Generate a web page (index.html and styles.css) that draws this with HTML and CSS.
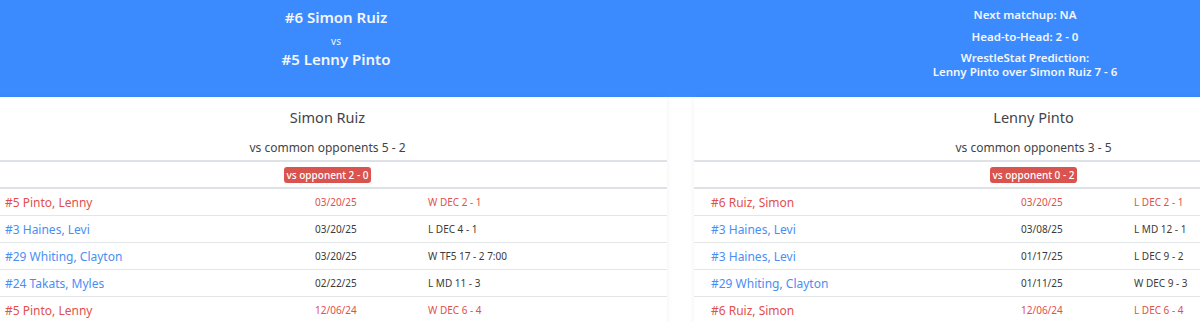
FILE: index.html
```html
<!DOCTYPE html>
<html>
<head>
<meta charset="utf-8">
<link rel="stylesheet" href="styles.css">
</head>
<body>
<div class="page">
  <header class="hero">
    <div class="hero-col hero-left">
      <div class="hero-name">#6 Simon Ruiz</div>
      <div class="hero-vs">vs</div>
      <div class="hero-name">#5 Lenny Pinto</div>
    </div>
    <div class="hero-col hero-right">
      <p class="hero-line">Next matchup: NA</p>
      <p class="hero-line">Head-to-Head: 2 - 0</p>
      <p class="hero-line">WrestleStat Prediction:<br>Lenny Pinto over Simon Ruiz 7 - 6</p>
    </div>
  </header>
  <main class="cards">
    <section class="card">
      <h2 class="card-title">Simon Ruiz</h2>
      <div class="card-sub">vs common opponents 5 - 2</div>
      <div class="badge-row"><span class="badge">vs opponent 2 - 0</span></div>
      <div class="row opp"><span class="c-name">#5 Pinto, Lenny</span><span class="c-date">03/20/25</span><span class="c-res">W DEC 2 - 1</span></div>
      <div class="row"><span class="c-name">#3 Haines, Levi</span><span class="c-date">03/20/25</span><span class="c-res">L DEC 4 - 1</span></div>
      <div class="row"><span class="c-name">#29 Whiting, Clayton</span><span class="c-date">03/20/25</span><span class="c-res">W TF5 17 - 2 7:00</span></div>
      <div class="row"><span class="c-name">#24 Takats, Myles</span><span class="c-date">02/22/25</span><span class="c-res">L MD 11 - 3</span></div>
      <div class="row opp"><span class="c-name">#5 Pinto, Lenny</span><span class="c-date">12/06/24</span><span class="c-res">W DEC 6 - 4</span></div>
    </section>
    <section class="card">
      <h2 class="card-title">Lenny Pinto</h2>
      <div class="card-sub">vs common opponents 3 - 5</div>
      <div class="badge-row"><span class="badge">vs opponent 0 - 2</span></div>
      <div class="row opp"><span class="c-name">#6 Ruiz, Simon</span><span class="c-date">03/20/25</span><span class="c-res">L DEC 2 - 1</span></div>
      <div class="row"><span class="c-name">#3 Haines, Levi</span><span class="c-date">03/08/25</span><span class="c-res">L MD 12 - 1</span></div>
      <div class="row"><span class="c-name">#3 Haines, Levi</span><span class="c-date">01/17/25</span><span class="c-res">L DEC 9 - 2</span></div>
      <div class="row"><span class="c-name">#29 Whiting, Clayton</span><span class="c-date">01/11/25</span><span class="c-res">W DEC 9 - 3</span></div>
      <div class="row opp"><span class="c-name">#6 Ruiz, Simon</span><span class="c-date">12/06/24</span><span class="c-res">L DEC 6 - 4</span></div>
    </section>
  </main>
</div>
</body>
</html>
```
FILE: styles.css
```css
html, body {
  margin: 0;
  padding: 0;
  background: #ffffff;
  overflow: hidden;
}
body {
  font-family: "Noto Sans", "Liberation Sans", sans-serif;
  color: #333;
}
.page {
  width: 1200px;
  overflow: hidden;
}
.hero {
  background: #3b8bff;
  color: #f4f6fb;
  height: 97px;
  display: grid;
  grid-template-columns: 672px 706px;
  overflow: hidden;
}
.hero-col {
  text-align: center;
}
.hero-left {
  padding-top: 6px;
}
.hero-name {
  font-size: 15px;
  font-weight: 600;
  line-height: 22px;
}
.hero-vs {
  font-size: 10px;
  line-height: 16px;
  margin: 5px 0 -1px;
}
.hero-right {
  padding-top: 8px;
}
.hero-line {
  margin: 0 0 7.5px;
  font-size: 11.5px;
  font-weight: 600;
  line-height: 14px;
}
.cards {
  display: flex;
  gap: 27px;
  margin-left: -12px;
  width: 1400px;
}
.card {
  width: 679px;
  flex: none;
  background: #fff;
  box-shadow: 0 0 6px rgba(0, 0, 0, 0.06);
  padding-bottom: 10px;
}
.card-title {
  margin: 0;
  padding-top: 9px;
  font-size: 14.5px;
  font-weight: 400;
  line-height: 22px;
  color: #3f4448;
  text-align: center;
}
.card-sub {
  font-size: 12px;
  line-height: 18px;
  padding: 11px 0 3px;
  text-align: center;
  color: #3f4448;
  border-bottom: 2px solid #dee2e6;
}
.badge-row {
  height: 25px;
  display: flex;
  align-items: center;
  justify-content: center;
  border-bottom: 2px solid #dee2e6;
}
.badge {
  background: #d9534f;
  color: #fff;
  font-size: 10px;
  font-weight: 500;
  line-height: 16px;
  padding: 0 3px;
  border-radius: 3px;
}
.row {
  display: grid;
  grid-template-columns: 310px 113px 1fr;
  padding-left: 17px;
  height: 26px;
  align-items: center;
  border-bottom: 1px solid #e3e6e9;
}
.c-name {
  font-size: 12px;
  color: #4a8ef5;
}
.c-date, .c-res {
  color: #3a3a3a;
  font-size: 10px;
}
.row.opp .c-name,
.row.opp .c-date,
.row.opp .c-res {
  color: #e0504d;
}
```
